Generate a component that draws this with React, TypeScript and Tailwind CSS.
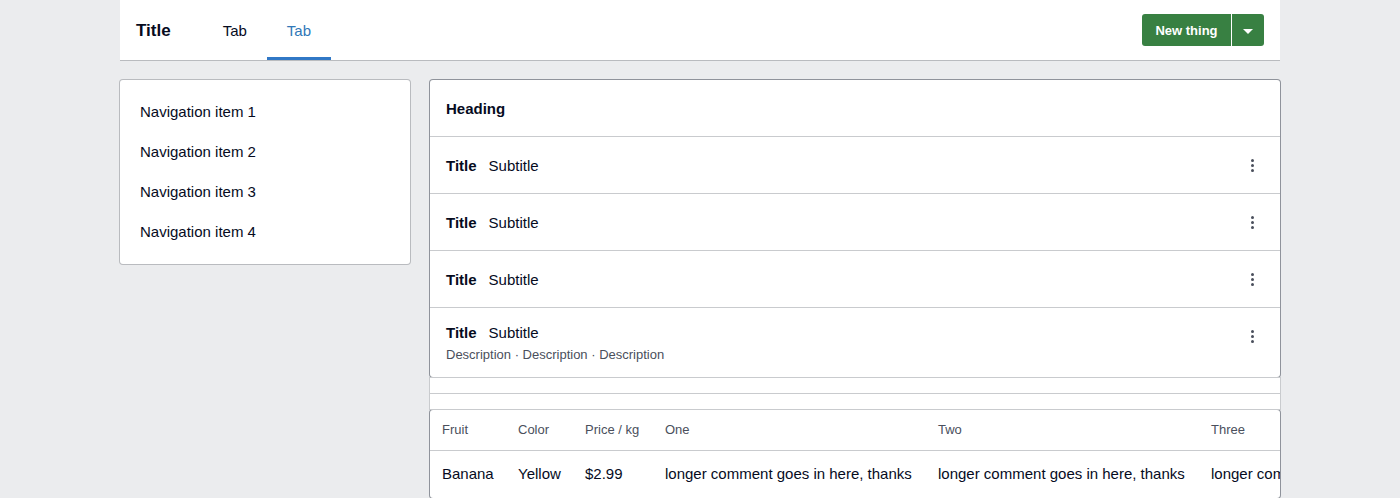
const rows: { title: string; subtitle: string; description?: string }[] = [
  { title: 'Title', subtitle: 'Subtitle' },
  { title: 'Title', subtitle: 'Subtitle' },
  { title: 'Title', subtitle: 'Subtitle' },
  { title: 'Title', subtitle: 'Subtitle', description: 'Description · Description · Description' },
];

const columns = [
  { label: 'Fruit', width: 'min-w-[76px]' },
  { label: 'Color', width: 'min-w-[67px]' },
  { label: 'Price / kg', width: 'min-w-[80px]' },
  { label: 'One', width: 'min-w-[273px]' },
  { label: 'Two', width: 'min-w-[273px]' },
  { label: 'Three', width: 'min-w-[273px]' },
];
const comment = 'longer comment goes in here, thanks';
const fruits = [['Banana', 'Yellow', '$2.99', comment, comment, comment]];

function Header() {
  return (
    <header className="flex h-[61px] items-stretch border-b border-[#b9bbbf] bg-white px-4">
      <h1 className="mr-8 flex items-center pt-[2px] text-[17px] font-bold">Title</h1>
      <nav className="flex" aria-label="Tabs">
        <a href="#one" className="flex items-center px-5 pt-[2px]">
          Tab
        </a>
        <a
          href="#two"
          aria-current="page"
          className="flex items-center border-b-3 border-[#3178c6] px-5 pt-[5px] text-[#3178b8]"
        >
          Tab
        </a>
      </nav>
      <div className="ml-auto flex items-center gap-px text-[13px] font-bold text-white">
        <button type="button" className="h-8 min-w-[89px] rounded-l-[3px] bg-[#388042] px-3 pt-px">
          New thing
        </button>
        <button
          type="button"
          aria-label="More actions"
          className="flex h-8 w-8 items-center justify-center rounded-r-[3px] bg-[#388042]"
        >
          <svg width="10" height="8" viewBox="0 0 10 8" fill="currentColor" aria-hidden="true">
            <path d="M0 3h10L5 8z" />
          </svg>
        </button>
      </div>
    </header>
  );
}

function SideNav() {
  return (
    <nav
      aria-label="Navigation"
      className="w-1/4 shrink-0 rounded-[3px] bg-white py-3 ring-1 ring-[#b9bbbf]"
    >
      {[1, 2, 3, 4].map((n) => (
        <a key={n} href={`#item-${n}`} className="flex h-10 items-center px-5">
          Navigation item {n}
        </a>
      ))}
    </nav>
  );
}

function MenuButton() {
  return (
    <button type="button" aria-label="Row menu" className="flex h-8 w-8 items-center justify-center text-[#4a4f5c]">
      <svg width="4" height="14" viewBox="0 0 4 14" fill="currentColor" aria-hidden="true">
        <circle cx="2.5" cy="2.5" r="1.5" />
        <circle cx="2.5" cy="7.5" r="1.5" />
        <circle cx="2.5" cy="12.5" r="1.5" />
      </svg>
    </button>
  );
}

export default function App() {
  return (
    <div className="min-h-screen overflow-hidden bg-[#ebecee] font-['Helvetica_Neue','Liberation_Sans',Arial,sans-serif] text-[15px] leading-5 text-[#060b1e]">
      <div className="mx-auto max-w-[1160px]">
        <Header />
        <div className="flex items-start gap-5 pt-[19px]">
          <SideNav />
          <main className="flex min-w-0 flex-1 flex-col gap-px">
            <section className="rounded-[3px] bg-white ring-1 ring-[#8f939b]">
              <h2 className="flex h-14 items-center px-4 pt-[2px] font-bold">Heading</h2>
              <ul>
                {rows.map((row, i) => (
                  <li key={i} className="flex items-start justify-between border-t border-[#c9cbce] py-3 pr-3 pl-4">
                    <div className="flex min-h-8 flex-col justify-center">
                      <p className="flex gap-3 pt-px leading-6">
                        <strong>{row.title}</strong>
                        <span>{row.subtitle}</span>
                      </p>
                      {row.description && <p className="text-[13px] text-[#4a4f5c]">{row.description}</p>}
                    </div>
                    <MenuButton />
                  </li>
                ))}
              </ul>
            </section>
            <div className="relative h-[15px] bg-white ring-1 ring-[#c9cbce]" />
            <div className="relative z-10 h-[15px] bg-white ring-1 ring-[#c9cbce]" />
            <section className="rounded-[3px] bg-white ring-1 ring-[#8f939b]">
              <div className="overflow-x-auto [scrollbar-width:none]">
                <table className="text-left whitespace-nowrap">
                  <thead className="text-[13px] text-[#4a4f5c]">
                    <tr className="h-10">
                      {columns.map((c) => (
                        <th key={c.label} scope="col" className={`px-3 font-normal ${c.width}`}>
                          {c.label}
                        </th>
                      ))}
                    </tr>
                  </thead>
                  <tbody>
                    {fruits.map((cells, i) => (
                      <tr key={i} className="h-12 border-t border-[#c9cbce]">
                        {cells.map((cell, j) => (
                          <td key={j} className="px-3">
                            {cell}
                          </td>
                        ))}
                      </tr>
                    ))}
                  </tbody>
                </table>
              </div>
            </section>
          </main>
        </div>
      </div>
    </div>
  );
}
